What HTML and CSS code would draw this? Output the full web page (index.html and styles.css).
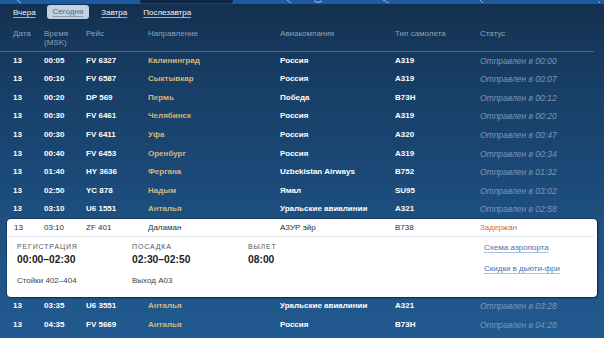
FILE: index.html
```html
<!DOCTYPE html>
<html lang="ru">
<head>
<meta charset="utf-8">
<title>Табло вылета</title>
<link rel="stylesheet" href="styles.css">
</head>
<body>
<div class="page">
  <div class="topbar">
    <svg width="604" height="4" viewBox="0 0 604 4" xmlns="http://www.w3.org/2000/svg">
      <rect width="604" height="4" fill="#1c5ba2"/>
      <path d="M140 0 H233 V1 Q233 3.6 229 3.6 H144 Q140 3.6 140 1 Z" fill="#0f2746"/>
      <path d="M17 0 L21 3" stroke="#cfe0f2" stroke-width="0.7" fill="none"/>
      <path d="M287 0 L291 3" stroke="#cfe0f2" stroke-width="0.7" fill="none"/>
      <path d="M314 1 Q318 4 322 1" stroke="#cfe0f2" stroke-width="0.8" fill="none"/>
      <path d="M383 0 L389 3" stroke="#cfe0f2" stroke-width="0.7" fill="none"/>
      <path d="M480 0 L483 3" stroke="#cfe0f2" stroke-width="0.7" fill="none"/>
      <path d="M598 1 L600 3" stroke="#cfe0f2" stroke-width="0.7" fill="none"/>
    </svg>
  </div>

  <nav class="days">
    <a class="day">Вчера</a>
    <span class="day active">Сегодня</span>
    <a class="day">Завтра</a>
    <a class="day">Послезавтра</a>
  </nav>

  <div class="board">
    <div class="row head">
      <div>Дата</div><div>Время<br>(MSK)</div><div>Рейс</div><div>Направление</div><div>Авиакомпания</div><div>Тип самолета</div><div>Статус</div>
    </div>

    <div class="row"><div>13</div><div>00:05</div><div>FV 6327</div><div class="dest">Калининград</div><div>Россия</div><div>A319</div><div class="status">Отправлен в 00:00</div></div>
    <div class="row"><div>13</div><div>00:10</div><div>FV 6587</div><div class="dest">Сыктывкар</div><div>Россия</div><div>A319</div><div class="status">Отправлен в 00:07</div></div>
    <div class="row"><div>13</div><div>00:20</div><div>DP 569</div><div class="dest">Пермь</div><div>Победа</div><div>B73H</div><div class="status">Отправлен в 00:12</div></div>
    <div class="row"><div>13</div><div>00:30</div><div>FV 6461</div><div class="dest">Челябинск</div><div>Россия</div><div>A319</div><div class="status">Отправлен в 00:20</div></div>
    <div class="row"><div>13</div><div>00:30</div><div>FV 6411</div><div class="dest">Уфа</div><div>Россия</div><div>A320</div><div class="status">Отправлен в 00:47</div></div>
    <div class="row"><div>13</div><div>00:40</div><div>FV 6453</div><div class="dest">Оренбург</div><div>Россия</div><div>A319</div><div class="status">Отправлен в 00:34</div></div>
    <div class="row"><div>13</div><div>01:40</div><div>HY 3636</div><div class="dest">Фергана</div><div>Uzbekistan Airways</div><div>B752</div><div class="status">Отправлен в 01:32</div></div>
    <div class="row"><div>13</div><div>02:50</div><div>YC 878</div><div class="dest">Надым</div><div>Ямал</div><div>SU95</div><div class="status">Отправлен в 03:02</div></div>
    <div class="row"><div>13</div><div>03:10</div><div>U6 1551</div><div class="dest">Анталья</div><div>Уральские авиалинии</div><div>A321</div><div class="status">Отправлен в 02:58</div></div>

    <div class="card">
      <div class="row card-row"><div>13</div><div>03:10</div><div>ZF 401</div><div>Даламан</div><div>АЗУР эйр</div><div>B738</div><div class="delayed">Задержан</div></div>
      <div class="details">
        <div class="phase">
          <div class="label">Регистрация</div>
          <div class="value">00:00–02:30</div>
          <div class="note">Стойки 402–404</div>
        </div>
        <div class="phase">
          <div class="label">Посадка</div>
          <div class="value">02:30–02:50</div>
          <div class="note">Выход A03</div>
        </div>
        <div class="phase wide">
          <div class="label">Вылет</div>
          <div class="value">08:00</div>
        </div>
        <div class="links">
          <a class="link">Схема аэропорта</a>
          <a class="link">Скидки в дьюти-фри</a>
        </div>
      </div>
    </div>

    <div class="row"><div>13</div><div>03:35</div><div>U6 3551</div><div class="dest">Анталья</div><div>Уральские авиалинии</div><div>A321</div><div class="status">Отправлен в 03:28</div></div>
    <div class="row"><div>13</div><div>04:35</div><div>FV 5669</div><div class="dest">Анталья</div><div>Россия</div><div>B73H</div><div class="status">Отправлен в 04:28</div></div>
  </div>
</div>
</body>
</html>
```

FILE: styles.css
```css
* { box-sizing: border-box; }

html, body {
  margin: 0;
  padding: 0;
}

body {
  width: 604px;
  height: 338px;
  overflow: hidden;
  font-family: "Liberation Sans", Arial, sans-serif;
  background: linear-gradient(180deg, #13304f 0%, #173c62 20%, #1a4673 45%, #1e5283 70%, #215a90 100%);
  color: #fff;
}

.page {
  display: flex;
  flex-direction: column;
}

.topbar {
  height: 4px;
  line-height: 0;
}

.topbar svg { display: block; }

.days {
  display: flex;
  align-items: center;
  height: 14px;
  margin-top: 1px;
  padding-left: 13px;
  font-size: 8px;
}

.day {
  color: #f2f6fa;
  text-decoration: underline;
  text-decoration-color: rgba(255,255,255,0.6);
  text-underline-offset: 2px;
  margin-right: 11px;
}

.day.active {
  background: #c3d2e1;
  color: #4f6680;
  text-decoration-color: rgba(79,102,128,0.5);
  border-radius: 3px;
  height: 14px;
  line-height: 14px;
  padding: 0 6px;
  margin-right: 12px;
}

.day:nth-child(3) { margin-right: 16px; }

.board {
  display: flex;
  flex-direction: column;
  margin-top: 10px;
}

.row {
  display: grid;
  grid-template-columns: 31px 42px 62px 132px 115px 85px 1fr;
  padding-left: 13px;
  height: 18.6px;
  line-height: 18.6px;
  font-size: 8px;
  font-weight: bold;
  white-space: nowrap;
}

.row.head {
  height: auto;
  line-height: 9.3px;
  font-weight: normal;
  color: #8aa0b7;
  padding-bottom: 3px;
  margin-right: 10px;
  margin-left: 0;
  border-bottom: 1px solid #4a6886;
}

.row .dest {
  color: #d6b67b;
}

.row .status {
  color: #7d97b6;
  font-weight: normal;
  font-style: italic;
  font-size: 8.5px;
}

.card {
  margin: 0 7px;
  width: 590px;
  height: 78px;
  background: #fff;
  border-radius: 4px;
  box-shadow: 0 0 0 1px rgba(10,30,55,0.35), 1px 1px 2px rgba(5,20,40,0.5);
  color: #333;
  display: flex;
  flex-direction: column;
}

.card-row {
  padding-left: 7px;
  grid-template-columns: 30px 42px 62px 132px 115px 85px 1fr;
  height: 18px;
  line-height: 18px;
  font-weight: normal;
  color: #2e2e2e;
  border-bottom: 1px solid #e6e9ec;
  margin-right: 3px;
}

.card-row .delayed {
  color: #e3643d;
}

.details {
  display: grid;
  grid-template-columns: 115px 116px 236px 1fr;
  padding-left: 10px;
  padding-top: 5px;
}

.label {
  font-size: 7px;
  letter-spacing: 0.85px;
  text-transform: uppercase;
  color: #555;
  line-height: 10px;
}

.value {
  font-size: 10.3px;
  font-weight: bold;
  color: #222;
  line-height: 13px;
  margin-top: 1px;
}

.note {
  font-size: 8px;
  color: #444;
  line-height: 10px;
  margin-top: 10px;
}

.links {
  display: flex;
  flex-direction: column;
  gap: 11px;
  font-size: 8px;
  line-height: 10px;
  padding-top: 1px;
}

.link {
  color: #3b72b3;
  text-decoration: underline;
  text-decoration-color: #a9c1dc;
  text-underline-offset: 2px;
}
```
